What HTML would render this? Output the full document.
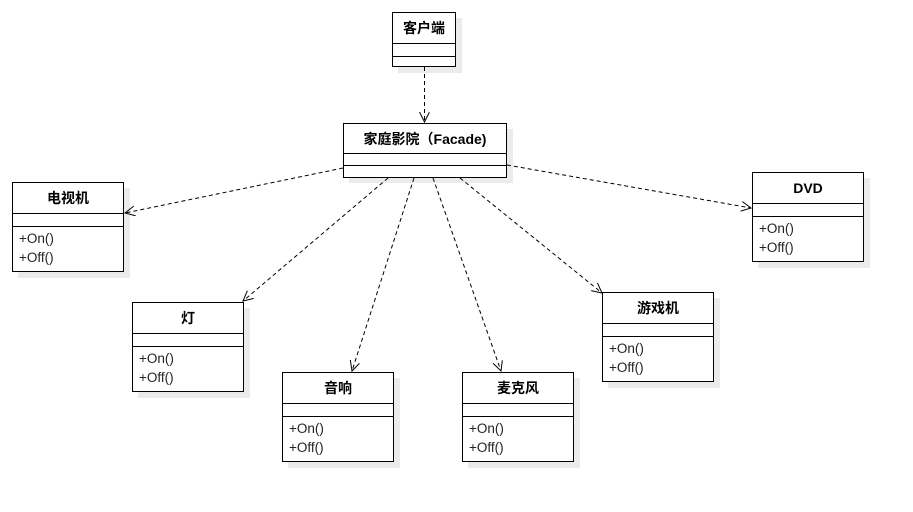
<!DOCTYPE html>
<html><head><meta charset="utf-8"><style>
html,body{margin:0;padding:0;background:#fff;width:913px;height:512px;overflow:hidden}
svg text{font-family:"Liberation Sans","Noto Sans CJK SC",sans-serif;}
</style></head><body>
<svg width="913" height="512" xmlns="http://www.w3.org/2000/svg">
<defs>
<marker id="a" markerWidth="12" markerHeight="12" refX="10" refY="5" orient="auto" markerUnits="userSpaceOnUse">
<path d="M0,0 L10,5 L0,10" fill="none" stroke="#000" stroke-width="1"/>
</marker>
</defs>
<g fill="#ebebeb">
<rect x="398" y="18" width="64" height="55"/>
<rect x="349" y="129" width="164" height="54"/>
<rect x="18" y="188" width="112" height="90"/>
<rect x="138" y="308" width="112" height="90"/>
<rect x="288" y="378" width="112" height="90"/>
<rect x="468" y="378" width="112" height="90"/>
<rect x="608" y="298" width="112" height="90"/>
<rect x="758" y="178" width="112" height="90"/>
</g>
<g stroke="#000" stroke-width="1" stroke-dasharray="4,3" fill="none" marker-end="url(#a)">
<line x1="424.5" y1="67" x2="424.5" y2="122"/>
<line x1="343" y1="168" x2="125" y2="213"/>
<line x1="388" y1="178" x2="243" y2="301"/>
<line x1="414" y1="178" x2="352" y2="371"/>
<line x1="433" y1="178" x2="501" y2="371"/>
<line x1="460" y1="178" x2="602" y2="293"/>
<line x1="507" y1="165" x2="751" y2="208"/>
</g>
<g fill="#fff" stroke="#000" stroke-width="1">
<rect x="392.5" y="12.5" width="63" height="54"/>
<line x1="392.5" y1="43.5" x2="455.5" y2="43.5"/><line x1="392.5" y1="56.5" x2="455.5" y2="56.5"/>
<rect x="343.5" y="123.5" width="163" height="54"/>
<line x1="343.5" y1="153.5" x2="506.5" y2="153.5"/><line x1="343.5" y1="165.5" x2="506.5" y2="165.5"/>
</g>
<g id="boxes" fill="#fff" stroke="#000" stroke-width="1">
<rect x="12.5" y="182.5" width="111" height="89"/><line x1="12.5" y1="213.5" x2="123.5" y2="213.5"/><line x1="12.5" y1="226.5" x2="123.5" y2="226.5"/>
<rect x="132.5" y="302.5" width="111" height="89"/><line x1="132.5" y1="333.5" x2="243.5" y2="333.5"/><line x1="132.5" y1="346.5" x2="243.5" y2="346.5"/>
<rect x="282.5" y="372.5" width="111" height="89"/><line x1="282.5" y1="403.5" x2="393.5" y2="403.5"/><line x1="282.5" y1="416.5" x2="393.5" y2="416.5"/>
<rect x="462.5" y="372.5" width="111" height="89"/><line x1="462.5" y1="403.5" x2="573.5" y2="403.5"/><line x1="462.5" y1="416.5" x2="573.5" y2="416.5"/>
<rect x="602.5" y="292.5" width="111" height="89"/><line x1="602.5" y1="323.5" x2="713.5" y2="323.5"/><line x1="602.5" y1="336.5" x2="713.5" y2="336.5"/>
<rect x="752.5" y="172.5" width="111" height="89"/><line x1="752.5" y1="203.5" x2="863.5" y2="203.5"/><line x1="752.5" y1="216.5" x2="863.5" y2="216.5"/>
</g>
<g font-size="14" font-weight="bold" text-anchor="middle" fill="#000">
<text x="424" y="33">客户端</text>
<text x="425" y="144">家庭影院（Facade)</text>
<text x="68" y="203">电视机</text>
<text x="188" y="323">灯</text>
<text x="338" y="393">音响</text>
<text x="518" y="393">麦克风</text>
<text x="658" y="313">游戏机</text>
<text x="808" y="193">DVD</text>
</g>
<g font-size="13.5" fill="#222">
<text x="19" y="243">+On()</text><text x="19" y="262">+Off()</text>
<text x="139" y="363">+On()</text><text x="139" y="382">+Off()</text>
<text x="289" y="433">+On()</text><text x="289" y="452">+Off()</text>
<text x="469" y="433">+On()</text><text x="469" y="452">+Off()</text>
<text x="609" y="353">+On()</text><text x="609" y="372">+Off()</text>
<text x="759" y="233">+On()</text><text x="759" y="252">+Off()</text>
</g>
</svg>
</body></html>
